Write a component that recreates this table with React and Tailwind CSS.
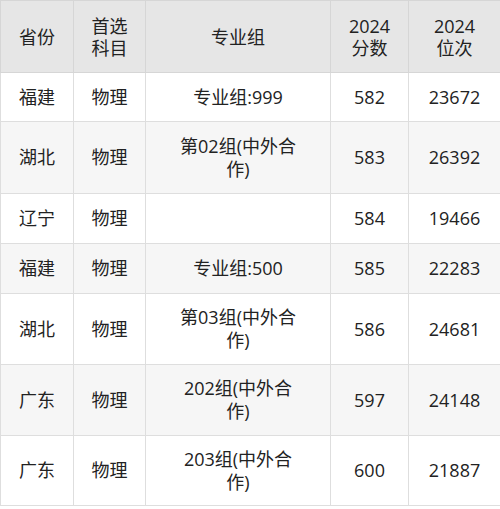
const rows = [
  { prov: '福建', subj: '物理', group: '专业组:999', score: '582', rank: '23672', h: 'h-[49px]' },
  { prov: '湖北', subj: '物理', group: '第02组(中外合作)', score: '583', rank: '26392', h: 'h-[72px]' },
  { prov: '辽宁', subj: '物理', group: '', score: '584', rank: '19466', h: 'h-[50px]' },
  { prov: '福建', subj: '物理', group: '专业组:500', score: '585', rank: '22283', h: 'h-[50px]' },
  { prov: '湖北', subj: '物理', group: '第03组(中外合作)', score: '586', rank: '24681', h: 'h-[71px]' },
  { prov: '广东', subj: '物理', group: '202组(中外合作)', score: '597', rank: '24148', h: 'h-[71px]' },
  { prov: '广东', subj: '物理', group: '203组(中外合作)', score: '600', rank: '21887', h: 'h-[70px]' },
];

const th = 'border border-[#d6d6d6] p-0 leading-[22px] font-normal';
const td = 'border border-[#dedede] p-0 leading-[23px] text-center';

export default function App() {
  return (
    <div
      className="w-[500px] bg-white text-[#222] text-[18px]"
      style={{ fontFamily: '"Open Sans", "Noto Sans CJK SC", sans-serif' }}
    >
      <table className="w-[500px] table-fixed border-collapse">
        <colgroup>
          <col className="w-[73px]" />
          <col className="w-[72px]" />
          <col className="w-[185px]" />
          <col className="w-[78px]" />
          <col className="w-[92px]" />
        </colgroup>
        <thead>
          <tr className="bg-[#e6e6e6] h-[72px]">
            <th className={th}>省份</th>
            <th className={th}>
              首选
              <br />
              科目
            </th>
            <th className={th}>专业组</th>
            <th className={th}>
              2024
              <br />
              分数
            </th>
            <th className={th}>
              2024
              <br />
              位次
            </th>
          </tr>
        </thead>
        <tbody>
          {rows.map((r, i) => (
            <tr key={i} className={(i % 2 === 1 ? 'bg-[#f6f6f6] ' : 'bg-white ') + r.h}>
              <td className={td}>{r.prov}</td>
              <td className={td}>{r.subj}</td>
              <td className={td}>
                <div className="mx-auto w-[130px]">{r.group}</div>
              </td>
              <td className={td}>{r.score}</td>
              <td className={td}>{r.rank}</td>
            </tr>
          ))}
        </tbody>
      </table>
    </div>
  );
}
